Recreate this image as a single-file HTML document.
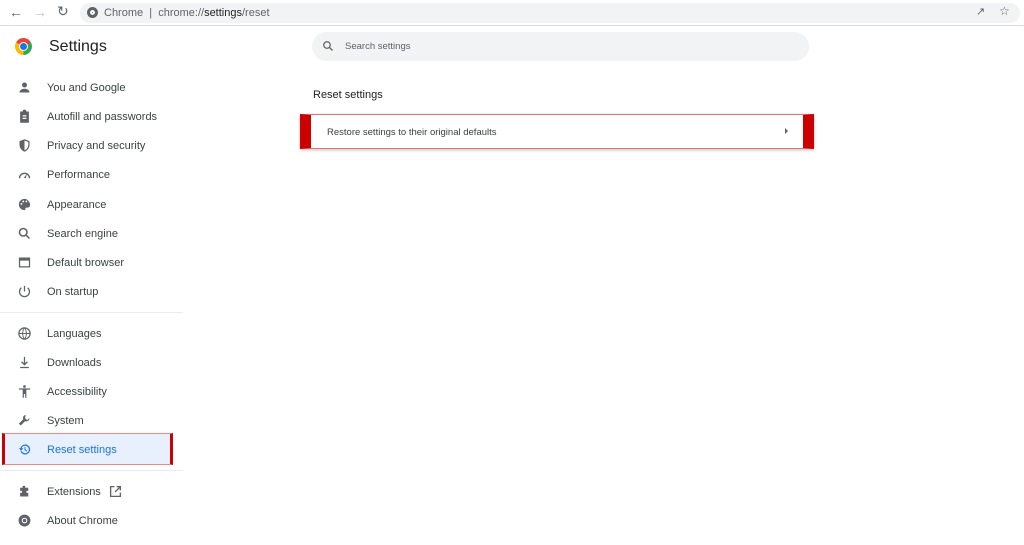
<!DOCTYPE html><html><head><style>
*{margin:0;padding:0;box-sizing:border-box}
body{width:1024px;height:545px;background:#fff;font-family:"Liberation Sans",Arial,sans-serif;position:relative;overflow:hidden;color:#202124}
.a{position:absolute}
.item{position:absolute;left:0;width:183px;height:29px;display:flex;align-items:center;font-size:11px;color:#3c4043}
.item svg{position:absolute;left:17px;width:15px;height:15px;fill:#5f6368}
.item span{position:absolute;left:47px}
</style></head><body>
<div class="a" style="left:0;top:0;width:1024px;height:26px;background:#fff;border-bottom:1px solid #dadce0"></div>
<div class="a" style="left:9px;top:4px;font-size:14px;color:#5f6368">&#8592;</div>
<div class="a" style="left:33px;top:4px;font-size:14px;color:#bdc1c6">&#8594;</div>
<div class="a" style="left:57px;top:3px;font-size:14px;color:#5f6368">&#8635;</div>
<div class="a" style="left:80px;top:3px;width:940px;height:20px;border-radius:10px;background:#f1f3f4"></div>
<div class="a" style="left:87px;top:7px;width:11px;height:11px;border-radius:50%;background:#5f6368;border:3px solid #5f6368;box-shadow:inset 0 0 0 2px #fff"></div>
<div class="a" style="left:104px;top:7px;font-size:11px;color:#5f6368">Chrome &nbsp;|&nbsp; chrome://<span style="color:#202124">settings</span>/reset</div>
<div class="a" style="left:976px;top:5px;font-size:11px;color:#5f6368">&#8599;</div>
<div class="a" style="left:999px;top:4px;font-size:12px;color:#5f6368">&#9734;</div>
<div class="a" style="left:15px;top:38px;width:17px;height:17px;border-radius:50%;background:conic-gradient(from -60deg,#ea4335 0 120deg,#34a853 120deg 240deg,#fbbc04 240deg 360deg)"></div>
<div class="a" style="left:19px;top:42px;width:9px;height:9px;border-radius:50%;background:#1a73e8;border:1.5px solid #fff"></div>
<div class="a" style="left:49px;top:38px;font-size:16px;color:#202124">Settings</div>
<div class="a" style="left:312px;top:32px;width:497px;height:29px;border-radius:15px;background:#f1f3f4"></div>
<svg class="a" style="left:322px;top:40px" width="12" height="12" viewBox="0 0 24 24"><circle cx="10" cy="10" r="6.5" fill="none" stroke="#5f6368" stroke-width="2.5"/><path d="M15 15l6 6" stroke="#5f6368" stroke-width="2.5"/></svg>
<div class="a" style="left:345px;top:41px;font-size:9.5px;color:#5f6368">Search settings</div>

<div class="a" style="left:2px;top:433px;width:171px;height:32px;background:#e8f0fe;border:1px solid #e88;border-left:3px solid #c00;border-right:3px solid #c00"></div>
<div class="item" style="top:73px"><svg viewBox="0 0 24 24"><circle cx="12" cy="8" r="4"/><path d="M4 20c0-4 4-6 8-6s8 2 8 6z"/></svg><span>You and Google</span></div>
<div class="item" style="top:102px"><svg viewBox="0 0 24 24"><path d="M5 4h4a3 3 0 016 0h4v18H5zm4 6v2h6v-2zm0 4v2h6v-2z" fill-rule="evenodd"/></svg><span>Autofill and passwords</span></div>
<div class="item" style="top:131px"><svg viewBox="0 0 24 24"><path d="M12 2l8 3v6c0 5-3.5 9-8 11-4.5-2-8-6-8-11V5z"/><path d="M12 4.2v15.6c3.3-1.7 6-5 6-8.8V6.3z" fill="#fff"/></svg><span>Privacy and security</span></div>
<div class="item" style="top:160px"><svg viewBox="0 0 24 24"><path d="M4 18a8 8 0 1116 0" fill="none" stroke="#5f6368" stroke-width="2.2"/><path d="M11 17l5-6-2 7z"/></svg><span>Performance</span></div>
<div class="item" style="top:190px"><svg viewBox="0 0 24 24"><path d="M12 3a9 9 0 000 18c1.5 0 2-1 1.5-2-.6-1 0-2 1.5-2h2a4 4 0 004-4c0-5-4-10-9-10z"/><circle cx="7" cy="11" r="1.5" fill="#fff"/><circle cx="10" cy="7" r="1.5" fill="#fff"/><circle cx="15" cy="7" r="1.5" fill="#fff"/></svg><span>Appearance</span></div>
<div class="item" style="top:219px"><svg viewBox="0 0 24 24"><circle cx="10" cy="10" r="6" fill="none" stroke="#5f6368" stroke-width="2.5"/><path d="M14 14l6 6" stroke="#5f6368" stroke-width="2.5"/></svg><span>Search engine</span></div>
<div class="item" style="top:248px"><svg viewBox="0 0 24 24"><path d="M3 4h18v16H3zm2 5v9h14V9z" fill-rule="evenodd"/></svg><span>Default browser</span></div>
<div class="item" style="top:277px"><svg viewBox="0 0 24 24"><path d="M11 3h2v9h-2z"/><path d="M7 6a8 8 0 1010 0" fill="none" stroke="#5f6368" stroke-width="2"/></svg><span>On startup</span></div>
<div class="a" style="left:0;top:312px;width:183px;height:1px;background:#e8eaed"></div>
<div class="item" style="top:319px"><svg viewBox="0 0 24 24"><circle cx="12" cy="12" r="9" fill="none" stroke="#5f6368" stroke-width="2"/><path d="M3 12h18M12 3c-4 5-4 13 0 18M12 3c4 5 4 13 0 18" fill="none" stroke="#5f6368" stroke-width="1.5"/></svg><span>Languages</span></div>
<div class="item" style="top:348px"><svg viewBox="0 0 24 24"><path d="M11 3h2v10l3-3 1.5 1.5L12 17l-5.5-5.5L8 10l3 3zM5 19h14v2H5z"/></svg><span>Downloads</span></div>
<div class="item" style="top:377px"><svg viewBox="0 0 24 24"><circle cx="12" cy="4" r="2.2"/><path d="M3 7h18v2h-6v13h-2v-6h-2v6H9V9H3z"/></svg><span>Accessibility</span></div>
<div class="item" style="top:406px"><svg viewBox="0 0 24 24"><path d="M14 3a5 5 0 00-4 7L3 17l3 3 7-7a5 5 0 007-5l-3 3-3-1-1-3z"/></svg><span>System</span></div>
<div class="item" style="top:435px;color:#1a73e8"><svg viewBox="0 0 24 24" style="fill:#1a73e8"><path d="M13 4a8 8 0 11-7.5 10.5h2.1A6 6 0 1013 6a6 6 0 00-5.6 4H10l-3.5 4L3 10h2.4A8 8 0 0113 4zm-1 4h1.5v4l3 2-.8 1.2L12 13z"/></svg><span>Reset settings</span></div>
<div class="a" style="left:0;top:470px;width:183px;height:1px;background:#e8eaed"></div>
<div class="item" style="top:477px"><svg viewBox="0 0 24 24"><path d="M9 3h4v3h5v5h-3v3h3v6H5v-6h3v-3H5V6h4z"/></svg><span>Extensions</span></div>
<svg class="a" style="left:109px;top:485px" width="13" height="13" viewBox="0 0 24 24"><path d="M10 3H3v18h18v-7M14 3h7v7M21 3L11 13" fill="none" stroke="#5f6368" stroke-width="2.5"/></svg>
<div class="item" style="top:506px"><svg viewBox="0 0 24 24"><circle cx="12" cy="12" r="9.5"/><circle cx="12" cy="12" r="4.5" fill="#fff"/><circle cx="12" cy="12" r="2.8"/></svg><span>About Chrome</span></div>

<div class="a" style="left:313px;top:89px;font-size:11px;color:#202124">Reset settings</div>
<div class="a" style="left:300px;top:114px;width:514px;height:35px;background:#fff;border:1px solid #e57373;border-left:11px solid #c00;border-right:11px solid #c00;box-shadow:0 1px 3px rgba(0,0,0,.25)"></div>
<div class="a" style="left:327px;top:127px;font-size:9.5px;color:#3c4043">Restore settings to their original defaults</div>
<div class="a" style="left:785px;top:128px;width:0;height:0;border-left:3px solid #5f6368;border-top:3px solid transparent;border-bottom:3px solid transparent"></div>
</body></html>
